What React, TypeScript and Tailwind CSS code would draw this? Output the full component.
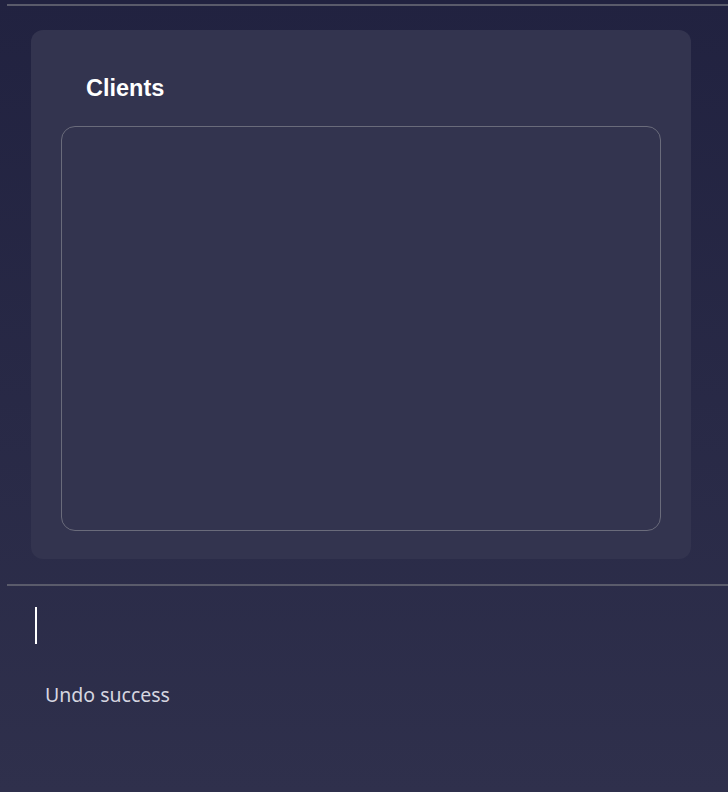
export default function App() {
  return (
    <div className="w-full min-h-screen h-[792px] overflow-hidden bg-gradient-to-b from-[#212240] to-[#2f304c] pl-[7px] pt-[4px]">
      <div className="h-[2px] bg-[#5a5b6b]" />

      <div className="mt-[24px] ml-[24px] w-[660px] h-[529px] rounded-xl bg-[#33344f] pt-[44px] pl-[30px]">
        <h2
          className="pl-[25px] text-[23.5px] leading-[28px] font-bold text-white"
          style={{ fontFamily: '"Liberation Sans", Arial, sans-serif' }}
        >
          Clients
        </h2>
        <div className="mt-[24px] w-[600px] h-[405px] rounded-[14px] border border-[#6a6b7b]" />
      </div>

      <div className="mt-[25px] h-[2px] bg-[#5a5b6b]" />

      <div className="pl-[28px] pt-[21px]">
        <div className="w-[2px] h-[37px] bg-white" />
      </div>

      <p
        className="mt-[37px] pl-[38px] text-[19.5px] leading-[28px] text-[#d6d6e0]"
        style={{ fontFamily: '"Noto Sans", "Open Sans", sans-serif' }}
      >
        Undo success
      </p>
    </div>
  );
}
